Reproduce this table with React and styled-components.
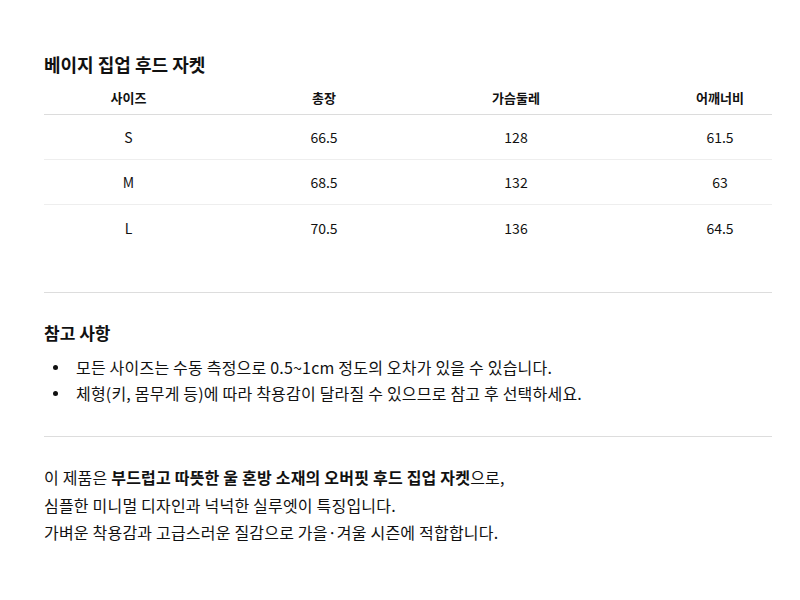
import React from 'react';
import styled, { createGlobalStyle } from 'styled-components';

const GlobalStyle = createGlobalStyle`
  body {
    margin: 0;
    background: #fff;
    color: #111;
    font-family: 'Noto Sans CJK KR', 'Noto Sans', sans-serif;
  }
`;

const Page = styled.div`
  padding: 51px 28px 40px 44px;
`;

const Title = styled.h2`
  margin: 0 0 4px;
  font-size: 18px;
  line-height: 26px;
  font-weight: 700;
`;

const SizeTable = styled.div`
  display: flex;
  flex-direction: column;
`;

const Row = styled.div`
  display: grid;
  grid-template-columns: 169px 222px 162px 1fr;
  align-items: center;
  height: ${(p) => (p.$head ? '34px' : '45px')};
  border-bottom: 1px solid ${(p) => (p.$head ? '#dcdcdc' : '#eeeeee')};
  box-sizing: border-box;

  &:last-child {
    border-bottom: none;
  }
`;

const Cell = styled.div`
  text-align: center;
  font-size: ${(p) => (p.$head ? '13px' : '14px')};
  font-weight: ${(p) => (p.$head ? 700 : 400)};
  color: #111;

  &:last-child {
    padding-left: 71px;
  }
`;

const Divider = styled.hr`
  margin: ${(p) => p.$margin};
  border: none;
  border-top: 1px solid #dddddd;
`;

const SectionTitle = styled.h3`
  margin: 0;
  font-size: 17px;
  line-height: 26px;
  font-weight: 700;
`;

const NoteList = styled.ul`
  margin: 8px 0 0;
  padding: 0;
  list-style: none;
  font-size: 16px;
  line-height: 26px;
  letter-spacing: 0.2px;
`;

const NoteItem = styled.li`
  display: flex;

  &::before {
    content: '';
    flex: none;
    width: 5px;
    height: 5px;
    border-radius: 50%;
    background: #111;
    margin: 11px 18px 0 9px;
  }
`;

const Description = styled.p`
  margin: 0;
  font-size: 16px;
  line-height: 27.5px;
  letter-spacing: 0.2px;
`;

const sizes = [
  ['S', '66.5', '128', '61.5'],
  ['M', '68.5', '132', '63'],
  ['L', '70.5', '136', '64.5'],
];

const App = () => (
  <>
    <GlobalStyle />
    <Page>
      <Title>베이지 집업 후드 자켓</Title>
      <SizeTable>
        <Row $head>
          {['사이즈', '총장', '가슴둘레', '어깨너비'].map((h) => (
            <Cell $head key={h}>{h}</Cell>
          ))}
        </Row>
        {sizes.map((row) => (
          <Row key={row[0]}>
            {row.map((v, i) => (
              <Cell key={i}>{v}</Cell>
            ))}
          </Row>
        ))}
      </SizeTable>

      <Divider $margin="42px 0 27px" />

      <SectionTitle>참고 사항</SectionTitle>
      <NoteList>
        <NoteItem>모든 사이즈는 수동 측정으로 0.5~1cm 정도의 오차가 있을 수 있습니다.</NoteItem>
        <NoteItem>체형(키, 몸무게 등)에 따라 착용감이 달라질 수 있으므로 참고 후 선택하세요.</NoteItem>
      </NoteList>

      <Divider $margin="30px 0 27px" />

      <Description>
        이 제품은 <strong>부드럽고 따뜻한 울 혼방 소재의 오버핏 후드 집업 자켓</strong>으로,
        <br />
        심플한 미니멀 디자인과 넉넉한 실루엣이 특징입니다.
        <br />
        가벼운 착용감과 고급스러운 질감으로 가을·겨울 시즌에 적합합니다.
      </Description>
    </Page>
  </>
);

export default App;
